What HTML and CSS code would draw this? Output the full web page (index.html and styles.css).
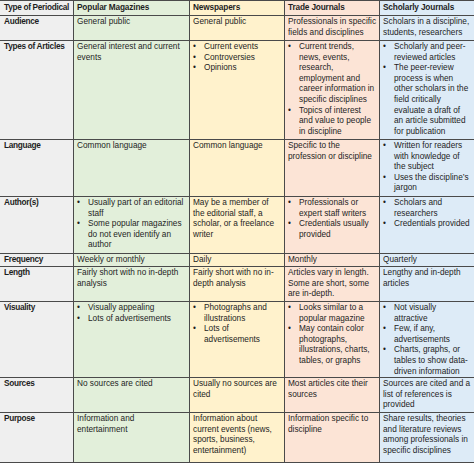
FILE: index.html
```html
<!DOCTYPE html>
<html lang="en">
<head>
<meta charset="utf-8">
<title>Types of Periodicals</title>
<link rel="stylesheet" href="styles.css">
</head>
<body>
<div class="sheet">
  <div class="c lab head">Type of Periodical</div>
  <div class="c pop head">Popular Magazines</div>
  <div class="c news head">Newspapers</div>
  <div class="c trade head">Trade Journals</div>
  <div class="c schol head">Scholarly Journals</div>

  <div class="c lab">Audience</div>
  <div class="c pop">General public</div>
  <div class="c news">General public</div>
  <div class="c trade"><span class="keep">Professionals in specific</span> fields and disciplines</div>
  <div class="c schol">Scholars in a discipline, students, researchers</div>

  <div class="c lab">Types of Articles</div>
  <div class="c pop">General interest and current events</div>
  <div class="c news"><ul><li>Current events</li><li>Controversies</li><li>Opinions</li></ul></div>
  <div class="c trade"><ul><li>Current trends, news, events, research, employment and career information in specific disciplines</li><li>Topics of interest and value to people in discipline</li></ul></div>
  <div class="c schol"><ul><li>Scholarly and peer-reviewed articles</li><li>The peer-review process is when <span class="keep">other scholars in the</span> field critically evaluate a draft of an article submitted for publication</li></ul></div>

  <div class="c lab">Language</div>
  <div class="c pop">Common language</div>
  <div class="c news">Common language</div>
  <div class="c trade">Specific to the profession or discipline</div>
  <div class="c schol"><ul><li>Written for readers with knowledge of the subject</li><li>Uses the discipline’s jargon</li></ul></div>

  <div class="c lab">Author(s)</div>
  <div class="c pop"><ul><li>Usually part of an editorial staff</li><li>Some popular magazines do not even identify an author</li></ul></div>
  <div class="c news">May be a member of the editorial staff, a scholar, or a freelance writer</div>
  <div class="c trade"><ul><li>Professionals or expert staff writers</li><li>Credentials usually provided</li></ul></div>
  <div class="c schol"><ul><li>Scholars and researchers</li><li>Credentials provided</li></ul></div>

  <div class="c lab">Frequency</div>
  <div class="c pop">Weekly or monthly</div>
  <div class="c news">Daily</div>
  <div class="c trade">Monthly</div>
  <div class="c schol">Quarterly</div>

  <div class="c lab">Length</div>
  <div class="c pop">Fairly short with no in-depth analysis</div>
  <div class="c news">Fairly short with no in-depth analysis</div>
  <div class="c trade">Articles vary in length. Some are short, some are in-depth.</div>
  <div class="c schol">Lengthy and in-depth articles</div>

  <div class="c lab">Visuality</div>
  <div class="c pop"><ul><li>Visually appealing</li><li>Lots of advertisements</li></ul></div>
  <div class="c news"><ul><li>Photographs and illustrations</li><li>Lots of advertisements</li></ul></div>
  <div class="c trade"><ul><li>Looks similar to a popular magazine</li><li>May contain color photographs, illustrations, charts, tables, or graphs</li></ul></div>
  <div class="c schol"><ul><li>Not visually attractive</li><li>Few, if any, advertisements</li><li>Charts, graphs, or tables to show data-driven information</li></ul></div>

  <div class="c lab">Sources</div>
  <div class="c pop">No sources are cited</div>
  <div class="c news">Usually no sources are cited</div>
  <div class="c trade">Most articles cite their sources</div>
  <div class="c schol">Sources are cited and a list of references is provided</div>

  <div class="c lab">Purpose</div>
  <div class="c pop">Information and entertainment</div>
  <div class="c news">Information about current events (news, sports, business, entertainment)</div>
  <div class="c trade">Information specific to discipline</div>
  <div class="c schol">Share results, theories and literature reviews among professionals in specific disciplines</div>
</div>
</body>
</html>
```

FILE: styles.css
```css
html, body {
  margin: 0;
  padding: 0;
  background: #ffffff;
}

.sheet {
  display: grid;
  grid-template-columns: 74px 116px 95px 95px 94px;
  grid-template-rows: 15px 25px 99px 57px 57px 13px 35px 76px 35px 50px;
  width: 474px;
  border-top: 1px solid #4a4a4a;
  font-family: "Liberation Sans", Arial, sans-serif;
  font-size: 8.25px;
  line-height: 10.6px;
  color: #1e1e1e;
}

.c {
  box-sizing: border-box;
  padding: 1px 3px 0 3px;
  border-right: 1px solid #4a4a4a;
  border-bottom: 1px solid #4a4a4a;
  overflow: hidden;
}

.c.schol {
  border-right: none;
}

.head {
  padding-top: 2px;
  font-weight: bold;
  letter-spacing: -0.15px;
}

.lab {
  padding-left: 4px;
  padding-right: 1px;
  background: #efefef;
  font-weight: bold;
  letter-spacing: -0.3px;
}

.pop {
  background: #e2efda;
}

.news {
  background: #fff2cc;
}

.trade {
  background: #fce4d6;
}

.schol {
  background: #ddebf7;
}

.keep {
  white-space: nowrap;
}

ul {
  list-style: none;
  margin: 0;
  padding: 0;
}

li {
  padding-left: 11px;
  text-indent: -11px;
}

li::before {
  content: "•";
  display: inline-block;
  width: 11px;
  text-indent: 0;
}
```
